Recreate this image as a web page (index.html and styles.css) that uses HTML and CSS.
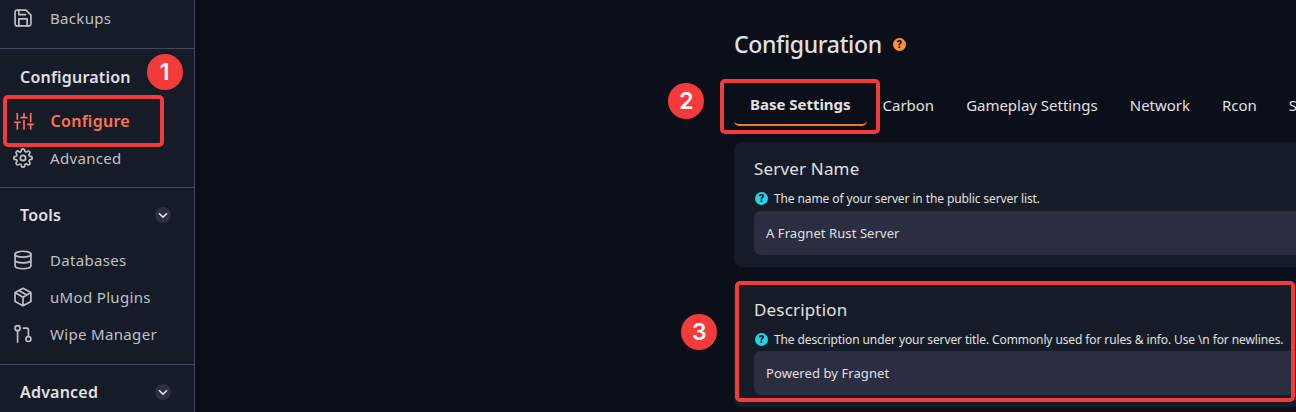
FILE: index.html
```html
<!DOCTYPE html>
<html lang="en">
<head>
<meta charset="utf-8">
<title>Configuration</title>
<link rel="stylesheet" href="styles.css">
</head>
<body>
<div class="app">
  <aside class="sidebar">
    <nav class="group">
      <a class="item"><svg class="icon" viewBox="0 0 24 24"><path d="M5 2.500h10.500l6 6V19a2.500 2.500 0 0 1-2.500 2.500H5A2.500 2.500 0 0 1 2.500 19V5A2.500 2.500 0 0 1 5 2.500z"/><path d="M7 2.500v5.500h8M7 21.500v-8.500h10v8.500"/></svg><span>Backups</span></a>
    </nav>
    <nav class="group">
      <h2 class="heading"><span>Configuration</span></h2>
      <a class="item active"><svg class="icon" viewBox="0 0 24 24"><path d="M4 21.500v-8M4 10V3M12 21.500V11.500M12 8V3M20 21.500V16M20 12.500V3M1 13.500h6.500M8.500 8h7M16.500 16H23"/></svg><span>Configure</span></a>
      <a class="item"><svg class="icon" viewBox="0 0 24 24"><circle cx="12" cy="12" r="3.200"/><path d="M19.400 15a1.650 1.650 0 0 0 .33 1.820l.06.06a2 2 0 1 1-2.830 2.830l-.06-.06a1.650 1.650 0 0 0-2.820 1.170V21a2 2 0 0 1-4 0v-.09A1.650 1.650 0 0 0 9 19.400a1.650 1.650 0 0 0-1.820.33l-.06.06a2 2 0 1 1-2.830-2.830l.06-.06A1.650 1.650 0 0 0 3.180 14H3a2 2 0 0 1 0-4h.09A1.650 1.650 0 0 0 4.600 9a1.650 1.650 0 0 0-.33-1.820l-.06-.06a2 2 0 1 1 2.830-2.830l.06.06A1.650 1.650 0 0 0 10 3.180V3a2 2 0 0 1 4 0v.09a1.650 1.650 0 0 0 2.820 1.170l.06-.06a2 2 0 1 1 2.830 2.830l-.06.06A1.650 1.650 0 0 0 20.910 10H21a2 2 0 0 1 0 4h-.09a1.650 1.650 0 0 0-1.510 1z"/></svg><span>Advanced</span></a>
    </nav>
    <nav class="group tools">
      <h2 class="heading raised-heading"><span>Tools</span><svg class="chevron" viewBox="0 0 16 16"><circle cx="8" cy="8" r="8"/><path d="M4 6.200l4 3.900 4-3.900"/></svg></h2>
      <a class="item"><svg class="icon" viewBox="0 0 24 24"><ellipse cx="12" cy="5" rx="9.500" ry="3.500"/><path d="M2.500 5v14c0 2 4.200 3.500 9.500 3.500s9.500-1.500 9.500-3.500V5M2.500 12c0 2 4.200 3.500 9.500 3.500s9.500-1.500 9.500-3.500"/></svg><span>Databases</span></a>
      <a class="item"><svg class="icon" viewBox="0 0 24 24"><path d="M12 1.500l9.500 5.200v10.600L12 22.500l-9.500-5.200V6.700zM2.500 6.700l9.500 5.500 9.500-5.500M12 12.200v10.300M7 4.200l9.500 5.400"/></svg><span>uMod Plugins</span></a>
      <a class="item"><svg class="icon" viewBox="0 0 24 24"><circle cx="5.500" cy="5" r="3"/><circle cx="18.500" cy="18" r="3"/><path d="M5.500 8v13.500M12.500 5h4a2 2 0 0 1 2 2v8"/></svg><span>Wipe Manager</span></a>
    </nav>
    <nav class="group">
      <h2 class="heading raised-heading"><span>Advanced</span><svg class="chevron" viewBox="0 0 16 16"><circle cx="8" cy="8" r="8"/><path d="M4 6.200l4 3.900 4-3.900"/></svg></h2>
    </nav>
  </aside>
  <main class="content">
    <header class="title"><h1 class="title-text">Configuration</h1><span class="help orange">?</span></header>
    <div class="tabs">
      <a class="tab selected"><span>Base Settings</span></a>
      <a class="tab"><span>Carbon</span></a>
      <a class="tab"><span>Gameplay Settings</span></a>
      <a class="tab"><span>Network</span></a>
      <a class="tab"><span>Rcon</span></a>
      <a class="tab"><span>S</span></a>
    </div>
    <section class="card">
      <h3 class="label raised">Server Name</h3>
      <p class="hint"><span class="help">?</span><span>The name of your server in the public server list.</span></p>
      <div class="field">A Fragnet Rust Server</div>
    </section>
    <section class="card">
      <h3 class="label">Description</h3>
      <p class="hint low"><span class="help">?</span><span>The description under your server title. Commonly used for rules &amp; info. Use \n for newlines.</span></p>
      <div class="field">Powered by Fragnet</div>
    </section>
  </main>
  <div class="mark mark-1"></div><div class="mark mark-2"></div><div class="mark mark-3"></div>
  <span class="step step-1">1</span><span class="step step-2">2</span><span class="step step-3">3</span>
</div>
</body>
</html>
```
FILE: styles.css
```css
* { box-sizing: border-box; }
body { margin: 0; background: #0b0f19; color: #e0e0e0; font-family: "Noto Sans", sans-serif; }
h1, h2, h3, p { margin: 0; font-weight: 400; }
span { white-space: nowrap; }
.app { position: relative; display: flex; width: 1296px; height: 412px; overflow: hidden; }

.sidebar { flex: none; width: 195px; background: #161c27; border-right: 1px solid #45455f; }
.group { padding-bottom: 10px; border-bottom: 1px solid #45455f; }
.group:first-child, .tools { padding-bottom: 11px; }
.item { display: flex; align-items: center; height: 37px; padding: 0 0 2px 13px; gap: 17px; font-size: 15px; letter-spacing: .33px; color: #bfc1c7; }
.icon { flex: none; width: 20px; height: 20px; fill: none; stroke: currentColor; stroke-width: 2; stroke-linecap: round; stroke-linejoin: round; }
.active { padding-left: 13.5px; color: #ff7355; font-weight: 600; font-size: 16px; letter-spacing: .28px; }
.heading { display: flex; align-items: center; justify-content: space-between; height: 54px; padding: 1px 23px 0 20px; font-size: 16px; font-weight: 600; letter-spacing: .2px; }
.raised-heading { padding: 0 23px 1px 20px; }
.chevron { width: 16px; height: 16px; fill: none; stroke: #e6e6ea; stroke-width: 1.5; }
.chevron circle { fill: #2b2f42; stroke: none; }

.content { flex: none; width: 1101px; padding: 24px 0 0 539px; }
.title { display: flex; align-items: center; gap: 11px; height: 40px; }
.title-text { font-size: 23px; font-weight: 500; letter-spacing: -.33px; }
.help { flex: none; display: flex; align-items: center; justify-content: center; width: 13px; height: 13px; border-radius: 50%; background: #22d3ee; color: #10151f; font-family: Roboto, sans-serif; font-size: 11px; font-weight: 900; line-height: 13px; }
.orange { background: #ff9238; }
.tabs { display: flex; height: 62px; margin-bottom: 16px; }
.tab { flex: none; display: flex; align-items: center; padding: 19px 16px 0; height: 62px; font-size: 15px; letter-spacing: -.02px; }
.selected { border-bottom: 2px solid #f9761a; border-radius: 5px; font-weight: 700; }
.card { width: 700px; height: 125px; margin-bottom: 15px; padding: 14px 20px 12px; border-radius: 8px; background: #161c27; }
.label { display: flex; align-items: center; height: 26px; font-size: 17px; letter-spacing: .17px; }
.raised { padding-bottom: 2px; }
.hint { display: flex; align-items: center; gap: 6px; height: 29px; padding: 4px 0 0 1px; font-size: 12px; letter-spacing: -.11px; }
.low { padding-top: 6px; }
.field { display: flex; align-items: center; height: 44px; padding-left: 12px; border-radius: 7px; background: #2b2e41; font-size: 13px; letter-spacing: .08px; }

.mark { position: absolute; border: 4px solid #f43b3b; border-radius: 5px; }
.mark-1 { left: 3px; top: 95px; width: 161px; height: 52px; }
.mark-2 { left: 720px; top: 79px; width: 160px; height: 55px; }
.mark-3 { left: 735px; top: 281px; width: 560px; height: 121px; }
.step { position: absolute; display: flex; align-items: center; justify-content: center; width: 36px; height: 36px; border-radius: 50%; background: #f43b3b; color: #fff; font: 600 23px Inter, sans-serif; }
.step-1 { left: 146.5px; top: 54.4px; }
.step-2 { left: 668.4px; top: 83.4px; }
.step-3 { left: 681.4px; top: 314.4px; }
```
